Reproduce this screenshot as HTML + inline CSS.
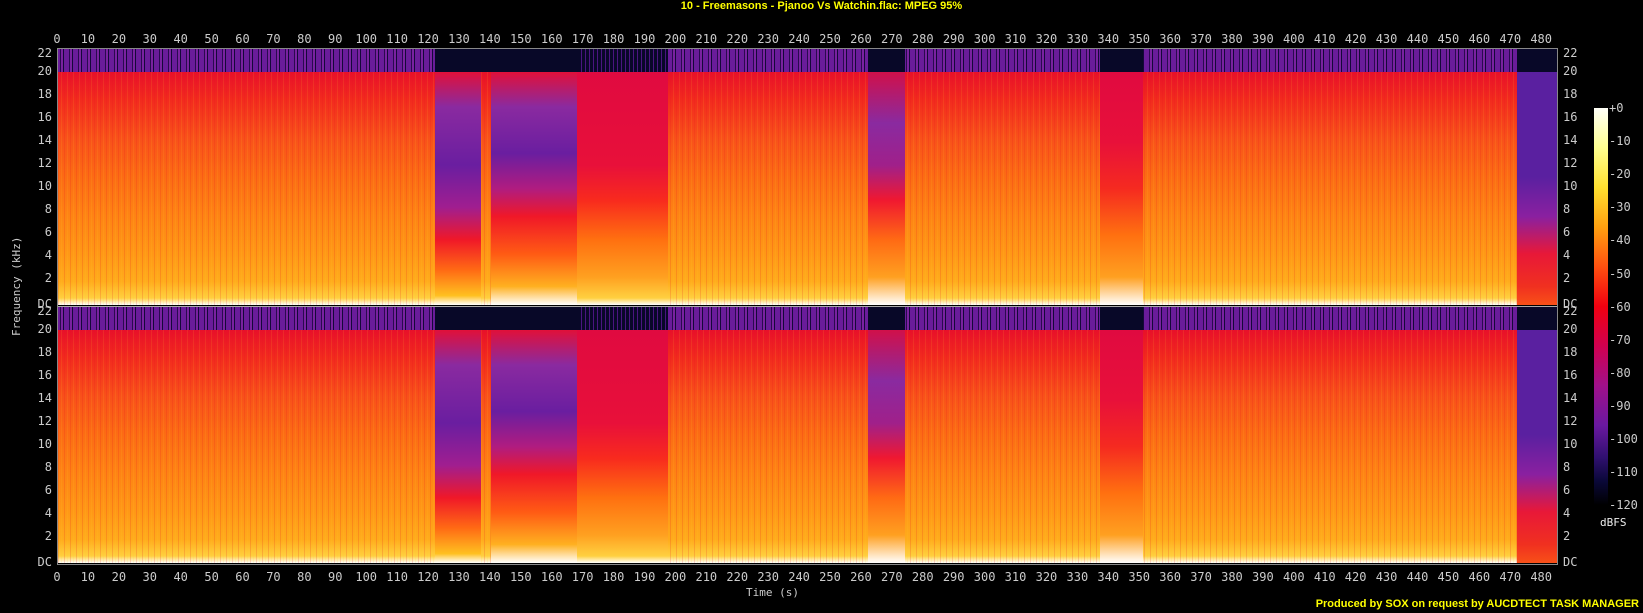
<!DOCTYPE html>
<html><head><meta charset="utf-8"><style>
body{margin:0;background:#000;width:1643px;height:613px;overflow:hidden;position:relative;font-family:"DejaVu Sans Mono","Liberation Mono",monospace;font-size:12px;color:#ccc}
.p{position:absolute;left:58px;width:1499px;height:256px;overflow:hidden;background:#000}
.band{position:absolute;left:0;top:0;width:100%;height:23px;background:repeating-linear-gradient(90deg,#6a1c9a 0,#6a1c9a 2px,#2a0a50 2px,#2a0a50 3px,#7a22a0 3px,#7a22a0 5px,#15083a 5px,#15083a 6px,#6a1c9a 6px,#6a1c9a 9px)}
.body{position:absolute;left:0;top:23px;width:100%;height:233px;background:linear-gradient(180deg,#e8102a 0%,#f22a1e 12%,#f8501a 28%,#fc6c14 45%,#fe8414 62%,#ff9816 78%,#ffac1c 90%,#ffd040 97%,#fff 100%)}
.str{position:absolute;left:0;top:23px;width:100%;height:233px;background:repeating-linear-gradient(90deg,rgba(230,20,30,.18) 0,rgba(230,20,30,.18) 1px,transparent 1px,transparent 3px,rgba(255,200,40,.12) 3px,rgba(255,200,40,.12) 4px,transparent 4px,transparent 6px)}
.o{position:absolute}
.nv{background:#080828}
.ax{position:absolute;left:57px;width:1500px;height:1px;background:#888}
.l{position:absolute;white-space:nowrap}
.tl{position:absolute;width:40px;text-align:center}
.fl{position:absolute;text-align:right;width:30px}
.fr{position:absolute;left:1563px}
</style></head><body>
<div class="l" style="left:0;width:1643px;text-align:center;top:0;color:#ff0;font-family:'Liberation Sans',sans-serif;font-weight:bold;font-size:11px">10 - Freemasons - Pjanoo Vs Watchin.flac: MPEG 95%</div>

<div class="p" style="top:49px">
<div class="band"></div><div class="body"></div><div class="str"></div>
<div class="o nv" style="left:377px;width:233px;top:0;height:23px"></div>
<div class="o" style="left:520px;width:90px;top:0;height:23px;background:repeating-linear-gradient(90deg,#080828 0,#080828 3px,#4a1480 3px,#4a1480 4px)"></div>
<div class="o nv" style="left:810px;width:37px;top:0;height:23px"></div>
<div class="o nv" style="left:1042px;width:43px;top:0;height:23px"></div>
<div class="o nv" style="left:1459px;width:40px;top:0;height:23px"></div>
<div class="o" style="left:377px;width:46px;top:23px;height:233px;background:linear-gradient(180deg,#e0103a 0%,#8a2aa0 15%,#6a1ea0 40%,#a01e90 58%,#f01828 72%,#ff6a14 85%,#ffc020 96%,#fff 100%)"></div>
<div class="o" style="left:433px;width:86px;top:23px;height:233px;background:linear-gradient(180deg,#e0103a 0%,#8a2aa0 15%,#6a1ea0 35%,#b01c80 50%,#f01828 62%,#ff5a14 78%,#ffb020 92%,#fff 100%)"></div>
<div class="o" style="left:519px;width:91px;top:23px;height:233px;background:linear-gradient(180deg,#e00a40 0%,#e8103a 40%,#f82a1e 55%,#ff7010 72%,#ffa020 88%,#ffd040 97%,#fff 100%)"></div>
<div class="o" style="left:810px;width:37px;top:23px;height:233px;background:linear-gradient(180deg,#d0104a 0%,#8a2aa0 22%,#a0208a 40%,#f01830 55%,#ff6a14 72%,#ffa020 88%,#fff 100%)"></div>
<div class="o" style="left:1042px;width:43px;top:23px;height:233px;background:linear-gradient(180deg,#e00a40 0%,#e8103a 30%,#f52a20 50%,#ff7010 70%,#ffa020 88%,#fff 100%)"></div>
<div class="o" style="left:1459px;width:40px;top:23px;height:233px;background:linear-gradient(180deg,#5a20a0 0%,#5a20a0 45%,#8a20a0 62%,#e81838 78%,#f03020 92%,#f85018 100%)"></div>
</div>

<div class="p" style="top:307px">
<div class="band"></div><div class="body"></div><div class="str"></div>
<div class="o nv" style="left:377px;width:233px;top:0;height:23px"></div>
<div class="o" style="left:520px;width:90px;top:0;height:23px;background:repeating-linear-gradient(90deg,#080828 0,#080828 3px,#4a1480 3px,#4a1480 4px)"></div>
<div class="o nv" style="left:810px;width:37px;top:0;height:23px"></div>
<div class="o nv" style="left:1042px;width:43px;top:0;height:23px"></div>
<div class="o nv" style="left:1459px;width:40px;top:0;height:23px"></div>
<div class="o" style="left:377px;width:46px;top:23px;height:233px;background:linear-gradient(180deg,#e0103a 0%,#8a2aa0 15%,#6a1ea0 40%,#a01e90 58%,#f01828 72%,#ff6a14 85%,#ffc020 96%,#fff 100%)"></div>
<div class="o" style="left:433px;width:86px;top:23px;height:233px;background:linear-gradient(180deg,#e0103a 0%,#8a2aa0 15%,#6a1ea0 35%,#b01c80 50%,#f01828 62%,#ff5a14 78%,#ffb020 92%,#fff 100%)"></div>
<div class="o" style="left:519px;width:91px;top:23px;height:233px;background:linear-gradient(180deg,#e00a40 0%,#e8103a 40%,#f82a1e 55%,#ff7010 72%,#ffa020 88%,#ffd040 97%,#fff 100%)"></div>
<div class="o" style="left:810px;width:37px;top:23px;height:233px;background:linear-gradient(180deg,#d0104a 0%,#8a2aa0 22%,#a0208a 40%,#f01830 55%,#ff6a14 72%,#ffa020 88%,#fff 100%)"></div>
<div class="o" style="left:1042px;width:43px;top:23px;height:233px;background:linear-gradient(180deg,#e00a40 0%,#e8103a 30%,#f52a20 50%,#ff7010 70%,#ffa020 88%,#fff 100%)"></div>
<div class="o" style="left:1459px;width:40px;top:23px;height:233px;background:linear-gradient(180deg,#5a20a0 0%,#5a20a0 45%,#8a20a0 62%,#e81838 78%,#f03020 92%,#f85018 100%)"></div>
</div>

<div class="ax" style="top:48px"></div>
<div class="ax" style="top:306px;background:#aaa"></div>
<div class="ax" style="top:564px"></div>
<div style="position:absolute;left:57px;top:48px;width:1px;height:517px;background:#888"></div>
<div style="position:absolute;left:1557px;top:48px;width:1px;height:517px;background:#888"></div>

<div style="position:absolute;left:1594px;top:108px;width:14px;height:397px;background:linear-gradient(180deg,#fffff8 0%,#ffff90 10%,#ffe030 20%,#ffa010 30%,#ff5010 40%,#f00010 50%,#d00050 60%,#a0108a 70%,#6a18a0 80%,#301070 88%,#0a0838 94%,#000 100%)"></div>

<div class="l" style="left:10px;top:336px;transform:rotate(-90deg);transform-origin:0 0;font-size:11px">Frequency (kHz)</div>
<div class="l" style="left:746px;top:586px;font-size:11px">Time (s)</div>
<div class="l" style="left:1600px;top:516px;color:#eee;font-size:11px">dBFS</div>
<div class="l" style="right:4px;top:598px;color:#ff0;font-family:'Liberation Sans',sans-serif;font-weight:bold;font-size:11px">Produced by SOX on request by AUCDTECT TASK MANAGER</div>

<div id="labels"></div>
<script>
var h='';
for(var t=0;t<=480;t+=10){var x=57+t*3.092-20;h+='<div class="tl" style="left:'+x+'px;top:32px">'+t+'</div><div class="tl" style="left:'+x+'px;top:570px">'+t+'</div>';}
var f=['22','20','18','16','14','12','10','8','6','4','2','DC'];
[49,307].forEach(function(p){for(var i=0;i<12;i++){var y=p+(i==11?256:i*23)-8;if(i==0)y=p-3;h+='<div class="fl" style="left:22px;top:'+y+'px">'+f[i]+'</div><div class="fr" style="top:'+y+'px">'+f[i]+'</div>';}});
var d=['+0','-10','-20','-30','-40','-50','-60','-70','-80','-90','-100','-110','-120'];
for(var i=0;i<13;i++){h+='<div class="l" style="left:1609px;top:'+(101+i*33.1)+'px">'+d[i]+'</div>';}
document.getElementById('labels').innerHTML=h;
</script>
</body></html>
